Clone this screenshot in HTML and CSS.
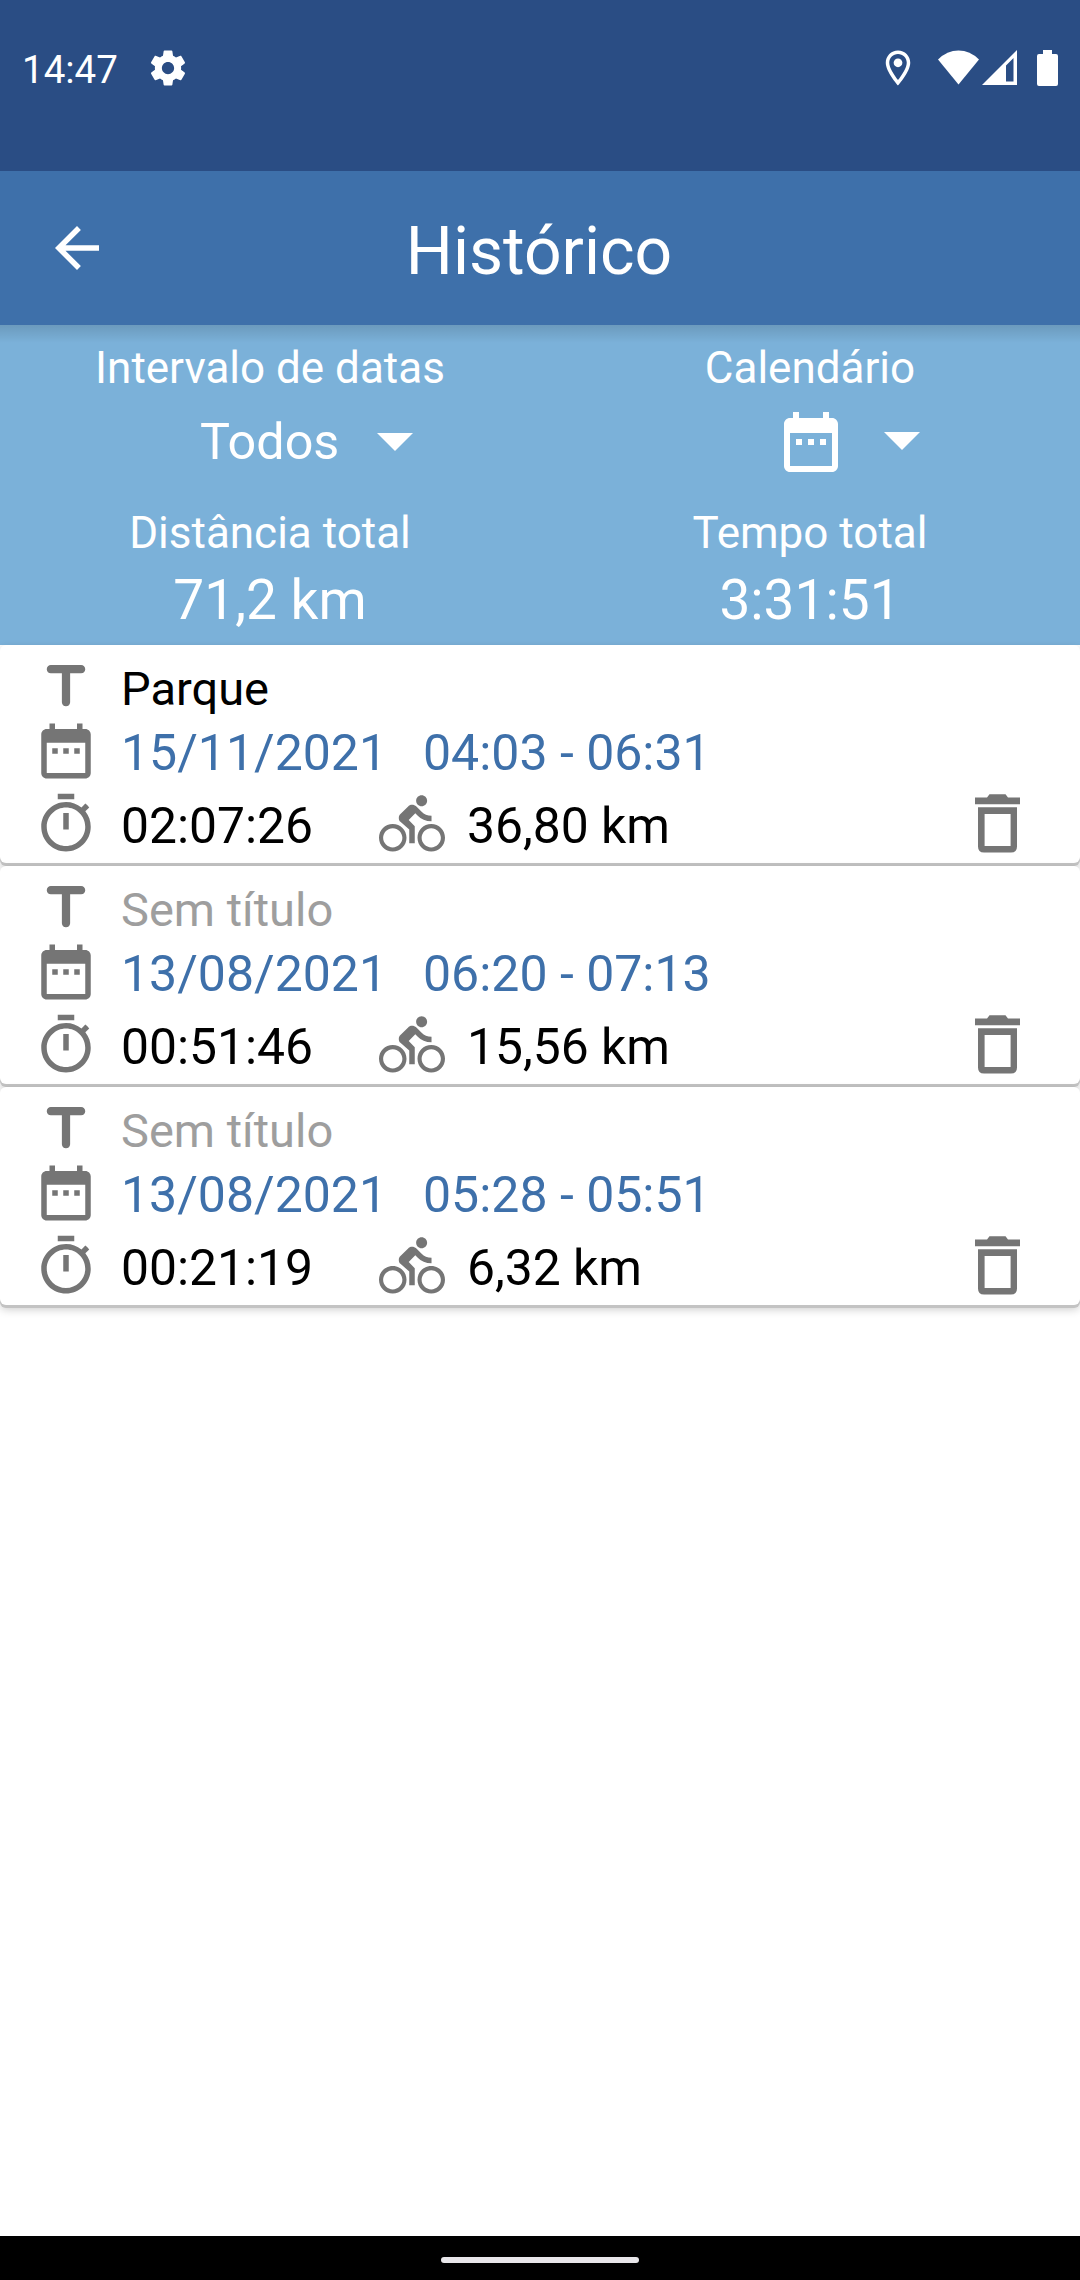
FILE: index.html
```html
<!DOCTYPE html>
<html lang="pt">
<head>
<meta charset="utf-8">
<title>Histórico</title>
<link rel="stylesheet" href="styles.css">
</head>
<body>
<svg class="defs" aria-hidden="true">
  <symbol id="calendar" viewBox="0 0 24 24"><path d="M9 11H7v2h2v-2zm4 0h-2v2h2v-2zm4 0h-2v2h2v-2zm2-7h-1V2h-2v2H8V2H6v2H5c-1.11 0-2 .9-2 2v14c0 1.1.89 2 2 2h14c1.1 0 2-.9 2-2V6c0-1.1-.9-2-2-2zm0 16H5V9h14v11z"/></symbol>
  <symbol id="title" viewBox="0 0 24 24"><path d="M5 5.5C5 6.33 5.67 7 6.5 7h4v10.5c0 .83.67 1.5 1.5 1.5s1.5-.67 1.5-1.5V7h4c.83 0 1.5-.67 1.5-1.5S18.33 4 17.5 4h-11C5.67 4 5 4.67 5 5.5z"/></symbol>
  <symbol id="timer" viewBox="0 0 24 24"><path d="M15 1H9v2h6V1zm-4 13h2V8h-2v6zm8.03-6.61l1.42-1.42c-.43-.51-.9-.99-1.41-1.41l-1.42 1.42C16.07 4.74 14.12 4 12 4c-4.97 0-9 4.03-9 9s4.02 9 9 9 9-4.03 9-9c0-2.12-.74-4.07-1.97-5.61zM12 20c-3.87 0-7-3.13-7-7s3.13-7 7-7 7 3.13 7 7-3.13 7-7 7z"/></symbol>
  <symbol id="bike" viewBox="0 0 24 24"><path d="M15.5 5.5c1.1 0 2-.9 2-2s-.9-2-2-2-2 .9-2 2 .9 2 2 2zM5 12c-2.8 0-5 2.2-5 5s2.2 5 5 5 5-2.2 5-5-2.2-5-5-5zm0 8.500c-1.900 0-3.500-1.600-3.500-3.500s1.600-3.500 3.500-3.500 3.500 1.600 3.500 3.500-1.600 3.500-3.500 3.500zm5.800-10l2.400-2.400.8.8c1.300 1.300 3 2.100 5.100 2.100V9c-1.500 0-2.700-.6-3.600-1.500l-1.900-1.900c-.5-.4-1-.6-1.600-.6s-1.100.2-1.400.6L7.800 8.400c-.4.4-.6.9-.6 1.400 0 .6.2 1.100.6 1.400L11 14v5h2v-6.200l-2.200-2.300zM19 12c-2.800 0-5 2.200-5 5s2.200 5 5 5 5-2.200 5-5-2.200-5-5-5zm0 8.500c-1.900 0-3.500-1.600-3.500-3.500s1.600-3.500 3.500-3.500 3.500 1.600 3.500 3.500-1.600 3.500-3.500 3.500z"/></symbol>
  <symbol id="trash" viewBox="0 0 45 59"><path d="M0 3.600H12L14.500.3H30.500L33 3.600H45V10.300H0zM3 13.300H42V52.500Q42 58.600 36 58.600H9Q3 58.600 3 52.500zM9.600 20V52H35.600V20z" fill-rule="evenodd"/></symbol>
</svg>
<div class="screen">
  <header class="status">
    <span class="clock">14:47</span>
    <svg class="cog" viewBox="0 0 24 24"><path fill-rule="evenodd" d="M19.430 12.980c.04-.32.07-.64.07-.98s-.03-.66-.07-.98l2.110-1.650c.19-.15.24-.42.12-.64l-2-3.460c-.12-.22-.39-.3-.61-.22l-2.490 1c-.52-.4-1.080-.73-1.690-.98l-.38-2.650C14.460 2.180 14.250 2 14 2h-4c-.25 0-.46.18-.49.42l-.38 2.650c-.61.25-1.170.59-1.690.98l-2.490-1c-.23-.09-.49 0-.61.22l-2 3.460c-.13.22-.07.49.12.64l2.110 1.650c-.04.32-.07.65-.07.98s.03.66.07.98l-2.110 1.650c-.19.15-.24.42-.12.64l2 3.460c.12.22.39.3.61.22l2.490-1c.52.4 1.080.73 1.690.98l.38 2.650c.03.24.24.42.49.42h4c.25 0 .46-.18.49-.42l.38-2.650c.61-.25 1.170-.59 1.690-.98l2.490 1c.23.09.49 0 .61-.22l2-3.460c.12-.22.07-.49-.12-.64l-2.110-1.650zM12 15.500c-1.930 0-3.500-1.570-3.500-3.500s1.570-3.500 3.500-3.500 3.500 1.570 3.500 3.500-1.570 3.500-3.500 3.500z"/></svg>
    <svg class="pin" viewBox="0 0 24 24"><path fill-rule="evenodd" d="M12 2C8.130 2 5 5.130 5 9c0 5.250 7 13 7 13s7-7.750 7-13c0-3.870-3.130-7-7-7zM7 9c0-2.760 2.240-5 5-5s5 2.240 5 5c0 2.880-2.880 7.190-5 9.880C9.920 16.210 7 11.850 7 9z"/><circle cx="12" cy="9" r="2.500"/></svg>
    <svg class="wifi" viewBox="0 0 41 35"><path d="M0 9.500Q9 .5 20.500.5T41 9.500L20.500 34.500z"/></svg>
    <svg class="signal" viewBox="0 0 35 35"><path fill-rule="evenodd" d="M35 0V35H0zM24 15.500V31.500H31.500V8z"/></svg>
    <svg class="battery" viewBox="0 0 21 36"><path d="M6 0H15V4H19Q21 4 21 6V34Q21 36 19 36H2Q0 36 0 34V6Q0 4 2 4H6z"/></svg>
  </header>
  <nav class="toolbar">
    <svg class="back" viewBox="0 0 24 24"><path d="M20 11H7.830l5.590-5.590L12 4l-8 8 8 8 1.410-1.410L7.830 13H20v-2z"/></svg>
    <h1 class="heading">Histórico</h1>
  </nav>
  <section class="summary">
    <div class="column">
      <div class="label">Intervalo de datas</div>
      <div class="picker range"><span>Todos</span><svg class="caret" viewBox="0 0 36 18"><path d="M0 0H36L18 18z"/></svg></div>
      <div class="label total">Distância total</div>
      <div class="value">71,2 km</div>
    </div>
    <div class="column">
      <div class="label">Calendário</div>
      <div class="picker date"><svg class="picker-icon"><use href="#calendar"/></svg><svg class="caret" viewBox="0 0 36 18"><path d="M0 0H36L18 18z"/></svg></div>
      <div class="label total">Tempo total</div>
      <div class="value time">3:31:51</div>
    </div>
  </section>
  <main class="list">
    <article class="card">
      <div class="row first"><svg class="icon"><use href="#title"/></svg><span class="name">Parque</span></div>
      <div class="row when"><svg class="icon"><use href="#calendar"/></svg><span class="day">15/11/2021</span><span>04:03 - 06:31</span></div>
      <div class="row stats"><svg class="icon"><use href="#timer"/></svg><span class="duration">02:07:26</span><svg class="icon bike"><use href="#bike"/></svg><span>36,80 km</span><svg class="trash"><use href="#trash"/></svg></div>
    </article>
    <article class="card">
      <div class="row first"><svg class="icon"><use href="#title"/></svg><span class="name untitled">Sem título</span></div>
      <div class="row when"><svg class="icon"><use href="#calendar"/></svg><span class="day">13/08/2021</span><span>06:20 - 07:13</span></div>
      <div class="row stats"><svg class="icon"><use href="#timer"/></svg><span class="duration">00:51:46</span><svg class="icon bike"><use href="#bike"/></svg><span>15,56 km</span><svg class="trash"><use href="#trash"/></svg></div>
    </article>
    <article class="card">
      <div class="row first"><svg class="icon"><use href="#title"/></svg><span class="name untitled">Sem título</span></div>
      <div class="row when"><svg class="icon"><use href="#calendar"/></svg><span class="day">13/08/2021</span><span>05:28 - 05:51</span></div>
      <div class="row stats"><svg class="icon"><use href="#timer"/></svg><span class="duration">00:21:19</span><svg class="icon bike"><use href="#bike"/></svg><span>6,32 km</span><svg class="trash"><use href="#trash"/></svg></div>
    </article>
  </main>
  <footer class="gesture"><div class="pill"></div></footer>
</div>
</body>
</html>
```
FILE: styles.css
```css
* { box-sizing: border-box; }
body { margin: 0; background: #fff; font-family: Roboto, "Noto Sans", sans-serif; }
svg { display: block; flex: none; fill: currentColor; }
.defs { display: none; }
.screen { display: flex; flex-direction: column; width: 1080px; height: 2280px; }

.status { display: flex; align-items: center; height: 171px; padding: 0 22px 36px; background: #2a4d84; color: #fff; }
.clock { width: 96px; padding-top: 4px; font-size: 38.5px; line-height: 48px; white-space: nowrap; }
.cog { width: 42px; height: 42px; margin-left: 29px; }
.pin { width: 42px; height: 42px; margin-left: auto; }
.wifi { width: 41px; height: 35px; margin-left: 19px; }
.signal { width: 35px; height: 35px; margin-left: 3px; }
.battery { width: 21px; height: 36px; margin-left: 20px; }

.toolbar { display: grid; grid-template-columns: 66px 1fr 66px; align-items: center; height: 154px; padding: 0 44px; background: #3e70aa; color: #fff; }
.back { width: 66px; height: 66px; }
.heading { margin: 0; padding: 7px 2px 0 0; font-size: 66px; font-weight: 400; line-height: 80px; text-align: center; }

.summary { display: grid; grid-template-columns: 1fr 1fr; height: 320px; padding-top: 13px; background: linear-gradient(rgba(0, 0, 0, .13), transparent 18px) #7bb1d9; color: #fff; }
.label { font-size: 44px; line-height: 60px; text-align: center; }
.total { margin-top: 20px; line-height: 54px; }
.value { font-size: 55px; line-height: 80px; text-align: center; }
.picker { display: flex; align-items: center; height: 88px; font-size: 50.3px; line-height: 60px; }
.range { padding-left: 200px; }
.range .caret { margin-left: 38px; }
.date { padding-left: 235px; }
.date .caret { margin-left: 37px; margin-bottom: 2px; }
.picker-icon { width: 72px; height: 72px; }
.caret { width: 36px; height: 18px; }

.list { display: flex; flex: 1; flex-direction: column; gap: 3px; }
.card { height: 218px; padding: 9px 60px 0 33px; border-radius: 6px; background: #fff; box-shadow: 0 3px 0 #c3c3c3, 0 4px 10px rgba(0, 0, 0, .22); }
.row { display: flex; height: 66px; color: #757575; }
.row span { padding-top: 2px; color: #000; font-size: 50px; line-height: 66px; white-space: nowrap; }
.first { height: 64px; }
.stats { margin-top: 7px; }
.stats span { font-size: 49.8px; }
.icon { width: 66px; height: 66px; margin-right: 22px; }
.row .name { font-size: 47px; }
.row .untitled { color: #9e9e9e; }
.row.when span { color: #3e70aa; }
.row .day { width: 302px; }
.duration { width: 258px; }
.trash { width: 45px; height: 59px; margin: 3px 0 0 auto; }

.gesture { display: flex; justify-content: center; height: 44px; padding-top: 21px; background: #000; }
.pill { width: 198px; height: 6px; border-radius: 3px; background: #e8e6ea; }
```
